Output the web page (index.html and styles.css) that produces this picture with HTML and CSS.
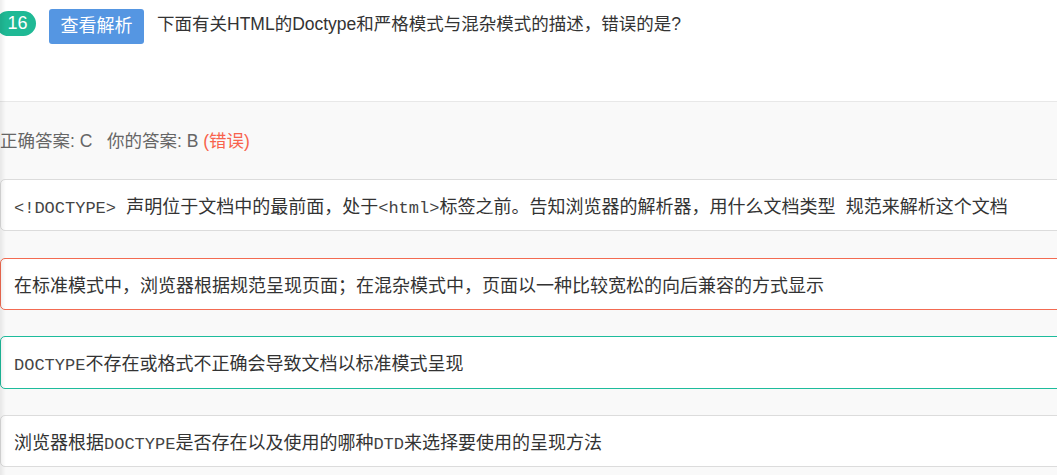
FILE: index.html
```html
<!DOCTYPE html>
<html lang="zh-CN">
<head>
<meta charset="utf-8">
<title>题目 16</title>
<link rel="stylesheet" href="styles.css">
</head>
<body>
<div class="page">
  <header class="header">
    <span class="badge">16</span>
    <button class="btn">查看解析</button>
    <div class="question">下面有关HTML的Doctype和严格模式与混杂模式的描述，错误的是?</div>
  </header>
  <main class="main">
    <div class="answer">正确答案: C&nbsp;&nbsp;&nbsp;你的答案: B <span class="wrong">(错误)</span></div>
    <div class="options">
      <div class="option"><span class="code">&lt;!DOCTYPE&gt; </span>声明位于文档中的最前面，处于<span class="code">&lt;html&gt;</span>标签之前。告知浏览器的解析器，用什么文档类型<span class="code"> </span>规范来解析这个文档</div>
      <div class="option option-wrong">在标准模式中，浏览器根据规范呈现页面；在混杂模式中，页面以一种比较宽松的向后兼容的方式显示</div>
      <div class="option option-right"><span class="code">DOCTYPE</span>不存在或格式不正确会导致文档以标准模式呈现</div>
      <div class="option">浏览器根据<span class="code">DOCTYPE</span>是否存在以及使用的哪种<span class="code">DTD</span>来选择要使用的呈现方法</div>
    </div>
  </main>
</div>
</body>
</html>
```

FILE: styles.css
```css
html, body {
  margin: 0;
  padding: 0;
  background: #f9f9f9;
  overflow: hidden;
}

body::before {
  content: "";
  position: fixed;
  left: 0;
  top: 0;
  bottom: 0;
  width: 6px;
  background: linear-gradient(to right, rgba(0, 0, 0, 0.07), rgba(0, 0, 0, 0));
  pointer-events: none;
  z-index: 5;
}

.page {
  width: 1057px;
  height: 475px;
  font-family: "Liberation Sans", "Noto Sans CJK SC", sans-serif;
}

.header {
  height: 92px;
  padding-top: 9px;
  background: #ffffff;
  border-bottom: 1px solid #e8e8e8;
  display: flex;
  align-items: flex-start;
}

.badge {
  margin-top: 2px;
  margin-left: -4px;
  width: 40px;
  height: 25px;
  border-radius: 13px;
  background: #1fb995;
  color: #ffffff;
  font-size: 18px;
  line-height: 25px;
  text-align: center;
  box-sizing: border-box;
  padding-left: 3px;
}

.btn {
  margin-left: 13px;
  width: 95px;
  height: 35px;
  border: none;
  border-radius: 3px;
  background: #5596e2;
  color: #ffffff;
  font-family: "Liberation Sans", "Noto Sans CJK SC", sans-serif;
  font-size: 18px;
  line-height: 35px;
  padding: 0;
}

.question {
  margin-left: 13px;
  margin-top: 0;
  font-size: 17.5px;
  line-height: 30px;
  color: #333333;
}

.main {
  padding-top: 27px;
}

.answer {
  font-size: 17.5px;
  line-height: 24px;
  color: #666666;
}

.wrong {
  color: #f8634d;
}

.options {
  margin-top: 26px;
  width: 1080px;
  display: flex;
  flex-direction: column;
  gap: 26.2px;
}

.option {
  box-sizing: border-box;
  height: 52.4px;
  background: #ffffff;
  border: 1px solid #dcdcdc;
  border-radius: 5px;
  padding: 0 13px;
  font-family: "Noto Sans CJK SC", sans-serif;
  font-size: 18px;
  line-height: 50px;
  color: #333333;
  white-space: nowrap;
  overflow: hidden;
}

.code {
  font-family: "Liberation Mono", monospace;
  font-size: 17px;
  line-height: 1;
  color: #444444;
}

.option-wrong {
  border-color: #f36b52;
}

.option-right {
  border-color: #1dbc9c;
}
```
